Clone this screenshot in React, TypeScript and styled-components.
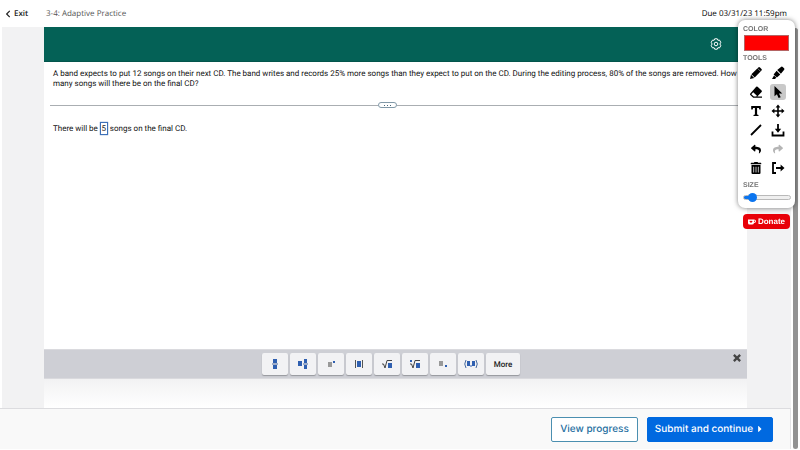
import React, { useState } from "react";
import styled, { createGlobalStyle } from "styled-components";
import { FaChevronLeft, FaReply, FaShare, FaTrashAlt, FaCaretRight } from "react-icons/fa";

const GlobalStyle = createGlobalStyle`
  *, *::before, *::after { box-sizing: border-box; }
  body {
    margin: 0;
    background: #fff;
    font-family: "Liberation Sans", Arial, sans-serif;
    text-rendering: geometricPrecision;
  }
  button, input { font: inherit; margin: 0; text-rendering: inherit; }
`;

const Screen = styled.div`
  display: flex;
  min-height: 100vh;
  padding: 0 2px 1px 0;
`;

const Page = styled.div`
  flex: 1;
  min-width: 0;
  display: flex;
  flex-direction: column;
`;

const Header = styled.header`
  display: flex;
  align-items: center;
  height: 27px;
  padding: 0 4px;
  font-family: "Open Sans", "Noto Sans", sans-serif;
  font-size: 8px;
  color: #333;
`;

const ExitLink = styled.a`
  display: flex;
  align-items: center;
  gap: 2px;
  width: 42px;
  height: 24px;
  color: #222;
  font-weight: 600;
  text-decoration: none;
  svg { width: 8px; height: 8px; }
`;

const Title = styled.h1`
  margin: 0;
  flex: 1;
  font-size: 8px;
  font-weight: 400;
  color: #555;
`;

const Due = styled.span`
  color: #000;
  font-weight: 500;
`;

const Stage = styled.main`
  flex: 1;
  display: flex;
  margin-left: 2px;
  padding: 0 44px 0 42px;
  background: #f2f2f3;
`;

const Sheet = styled.section`
  flex: 1;
  min-width: 0;
  display: flex;
  flex-direction: column;
  background: #fff;
`;

const Banner = styled.div`
  display: flex;
  align-items: center;
  justify-content: flex-end;
  height: 35px;
  padding-right: 25px;
  background: #046156;
  border-bottom: 1px solid #03554c;
`;

const BannerButton = styled.button`
  display: flex;
  padding: 0;
  border: 0;
  background: none;
  color: #fff;
`;

const Exercise = styled.div`
  flex: 1;
  padding: 7px 6px;
  font-family: Roboto, "Liberation Sans", sans-serif;
  font-size: 8px;
  line-height: 10px;
  color: #111;
`;

const Question = styled.p`
  margin: 0;
  padding: 0 0 0 3px;
`;

const Divider = styled.div`
  display: flex;
  align-items: center;
  height: 6px;
  margin-top: 13px;
  &::before, &::after { content: ""; height: 1px; background: #aaaeb2; }
  &::before { flex: 328; }
  &::after { flex: 344; }
`;

const DividerHandle = styled.button`
  display: flex;
  align-items: center;
  justify-content: center;
  gap: 2px;
  width: 19px;
  height: 6px;
  padding: 0;
  border: 1px solid #8299a8;
  border-radius: 3px;
  background: #fff;
`;

const Dot = styled.i`
  width: 1px;
  height: 1px;
  background: #4a6678;
`;

const Answer = styled.label`
  display: flex;
  align-items: center;
  gap: 2px;
  margin-top: 14px;
  padding-left: 3px;
`;

const AnswerInput = styled.input`
  width: 8px;
  height: 13px;
  padding: 0;
  border: 1px solid #3d70b8;
  border-radius: 0;
  outline: 0;
  background: #fff;
  box-shadow: 0 0 1px #3d70b8;
  color: #222;
  text-align: center;
`;

const MathBar = styled.div`
  display: flex;
  height: 30px;
  padding: 3px 6px 3px 218px;
  border: 1px solid #dadade;
  border-width: 1px 0;
  background: #cecfd5;
`;

const Keys = styled.div`
  flex: 1;
  display: flex;
  gap: 2px;
`;

const Key = styled.button<{ $wide?: boolean }>`
  display: flex;
  align-items: center;
  justify-content: center;
  width: ${(p) => (p.$wide ? 34 : 26)}px;
  height: 22px;
  padding: 0;
  border: 0;
  border-radius: 2px;
  background: #f2f2f4;
  box-shadow: 0 1px 1px #96979d;
  font-family: Roboto, sans-serif;
  font-size: 8px;
  font-weight: 500;
  color: #222;
`;

const CloseButton = styled.button`
  display: flex;
  width: 8px;
  height: 8px;
  margin-top: 1px;
  padding: 0;
  border: 0;
  background: none;
`;

const Fade = styled.div`
  height: 29px;
  background: linear-gradient(#f2f2f3, #fff);
`;

const Footer = styled.footer`
  display: flex;
  align-items: center;
  justify-content: flex-end;
  gap: 9px;
  height: 41px;
  padding-right: 17px;
  border-top: 1px solid #dcdcdf;
  border-right: 1px solid #e4e4e6;
  background: #f9f9f9;
`;

const Action = styled.button<{ $primary?: boolean }>`
  display: flex;
  align-items: center;
  justify-content: center;
  gap: 2px;
  width: ${(p) => (p.$primary ? 126 : 87)}px;
  height: 25px;
  padding: 0;
  border: 1px solid ${(p) => (p.$primary ? "#0069e0" : "#4b8fb0")};
  border-radius: 2px;
  background: ${(p) => (p.$primary ? "#0069e0" : "#fff")};
  color: ${(p) => (p.$primary ? "#fff" : "#1f6f9f")};
  font-family: Inter, sans-serif;
  font-size: 10px;
  font-weight: 500;
`;

const Scrollbar = styled.div`
  width: 7px;
  padding: 28px 0 0 2px;
  display: flex;
`;

const Thumb = styled.div`
  flex: 1;
  border-radius: 3px;
  background: #929292;
`;

const Palette = styled.aside`
  position: fixed;
  top: 20px;
  right: 5px;
  width: 57px;
`;

const PaletteCard = styled.div`
  padding: 5px 5px 6px;
  border-radius: 7px;
  background: #fff;
  box-shadow: 0 0 5px rgba(0, 0, 0, 0.5);
`;

const Caption = styled.div`
  display: block;
  height: 9px;
  font-size: 7px;
  line-height: 9px;
  font-weight: 700;
  color: #777;
`;

const Swatch = styled.button`
  display: block;
  width: 45px;
  height: 16px;
  margin: 1px 0 3px 1px;
  padding: 0;
  border: 1px solid #b46464;
  background: #f00;
`;

const ToolGrid = styled.div`
  display: grid;
  grid-template-columns: 16px 16px;
  column-gap: 6px;
  row-gap: 3px;
  margin: 2px 0 5px 5px;
`;

const Tool = styled.button<{ $active?: boolean; $muted?: boolean }>`
  display: flex;
  align-items: center;
  justify-content: center;
  height: 16px;
  padding: 0;
  border: 0;
  border-radius: 3px;
  background: ${(p) => (p.$active ? "#c9c9c9" : "none")};
  color: ${(p) => (p.$muted ? "#b5b5b5" : "#000")};
`;

const SizeSlider = styled.input`
  display: block;
  appearance: none;
  width: 48px;
  height: 9px;
  margin-top: 3px;
  background: none;
  &::-webkit-slider-runnable-track {
    height: 5px;
    border: 1px solid #b9b9b9;
    border-radius: 3px;
    background: linear-gradient(90deg, #0c75ef 18%, #efefef 18%);
  }
  &::-webkit-slider-thumb {
    appearance: none;
    width: 9px;
    height: 9px;
    margin-top: -3px;
    border-radius: 50%;
    background: #0c75ef;
  }
`;

const Donate = styled.a`
  display: flex;
  align-items: center;
  justify-content: center;
  gap: 2px;
  width: 47px;
  height: 15px;
  margin: 6px 0 0 5px;
  border-radius: 4px;
  background: #e80008;
  color: #fff;
  font-size: 8px;
  font-weight: 700;
  text-decoration: none;
`;

const blue = "#2f5fb0";

const keys = [
  { label: "Fraction", art: <><path fill={blue} d="M5 2h4v4H5zM5 8h4v4H5z" /><path stroke="#4a679b" d="M4 7h6" /></> },
  { label: "Mixed number", art: <><path fill={blue} d="M2 4h4v5H2zM8 2h3v4H8zM8 8h3v4H8z" /><path stroke="#4a679b" d="M7 7h5" /></> },
  { label: "Exponent", art: <><path fill="#999" d="M4 5h4v5H4z" /><path fill={blue} d="M9 4h2v2H9z" /></> },
  { label: "Absolute value", art: <><path fill={blue} d="M5 4h4v6H5z" /><path stroke="#555" d="M3.500 3v8M10.500 3v8" /></> },
  { label: "Square root", art: <><path fill={blue} d="M8 6h4v5H8z" /><path fill="none" stroke="#444" d="M2 7l1.500 0 1.500 4L7 3.500h5" /></> },
  { label: "Root", art: <><path fill={blue} d="M8 6h4v5H8zM2 3h2v2H2z" /><path fill="none" stroke="#444" d="M2 7l1.500 0 1.500 4L7 3.500h5" /></> },
  { label: "Subscript", art: <><path fill="#999" d="M3 4h4v5H3z" /><path fill={blue} d="M9 8h2v2H9z" /></> },
  { label: "Ordered pair", art: <><path fill={blue} d="M3 4h3v5H3zM8 4h3v5H8zM6.500 8h1v2h-1z" /><path fill="none" stroke="#46699f" d="M2 3Q-.5 7 2 11M12 3Q14.500 7 12 11" /></> },
];

const Glyph = ({ children, size = 14 }: { children: React.ReactNode; size?: number }) => (
  <svg width={size} height={size} viewBox="0 0 14 14" fill="currentColor" aria-hidden="true">{children}</svg>
);

const tools = [
  { label: "Pencil", icon: <Glyph><path d="M1 13l1-4.200 3.200 3.300zM2.400 8.200L9.300 1.400q.8-.8 1.700 0l1.500 1.500q.8.8 0 1.700L5.700 11.500z" /><path stroke="#fff" strokeWidth=".5" d="M8.600 2.400l3 3" /></Glyph> },
  { label: "Highlighter", icon: <Glyph><path d="M1 13l2-3.500 2.200 2.100-1.100 1.400zM2.600 8.400L5.600 4.700l3.700 3.700-3.400 3.100zM6.200 4.100l4.100-3.300q.7-.5 1.400.1l1.400 1.400q.6.7.1 1.400L9.900 7.800z" /></Glyph> },
  { label: "Eraser", icon: <Glyph><path d="M7.200 1.800q.7-.7 1.400 0l4 3.700q.7.7 0 1.400L8.300 11.400H13v1.300H4.200L1.300 9.900q-.7-.7 0-1.400z" /><path fill="#fff" d="M4.200 7.200l3.700 3.600-.6.6H4.800L2.300 9.200z" /></Glyph> },
  { label: "Select", active: true, icon: <Glyph><path d="M3.500 1l7.800 7.400H8l1.700 3.800-2.100.9-1.700-3.900-2.400 2z" /></Glyph> },
  { label: "Text", icon: <Glyph><path d="M2.200 2h9.600v3.400h-1.500l-.4-1.500H8.100v6.700l1.400.4v1h-5v-1l1.400-.4V3.900H4.100l-.4 1.500H2.200z" /></Glyph> },
  { label: "Move", icon: <Glyph><path fill="none" stroke="currentColor" strokeWidth="1.600" d="M7 2v10M2 7h10" /><path d="M7 .5l2.400 2.900H4.600zM7 13.500l2.400-2.900H4.600zM.5 7l2.900-2.400v4.800zM13.500 7l-2.900-2.400v4.800z" /></Glyph> },
  { label: "Line", icon: <Glyph><path stroke="currentColor" strokeWidth="1.800" d="M2 12L12 2" /></Glyph> },
  { label: "Download", icon: <Glyph><path fill="none" stroke="currentColor" strokeWidth="1.800" d="M1.500 8.500v4h11v-4M7 1v6" /><path d="M3.800 5.800h6.400L7 9.800z" /></Glyph> },
  { label: "Undo", icon: <FaReply size={10} /> },
  { label: "Redo", muted: true, icon: <FaShare size={10} /> },
  { label: "Clear", icon: <FaTrashAlt size={12} /> },
  { label: "Leave", icon: <Glyph><path fill="none" stroke="currentColor" strokeWidth="1.800" d="M5 2H2v10h3M5 7h6" /><path d="M9.600 3.600L13.500 7l-3.900 3.400z" /></Glyph> },
];

export default function App() {
  const [answer, setAnswer] = useState("5");
  const [size, setSize] = useState(10);
  return (
    <>
      <GlobalStyle />
      <Screen>
        <Page>
          <Header>
            <ExitLink href="#exit"><FaChevronLeft />Exit</ExitLink>
            <Title>3-4: Adaptive Practice</Title>
            <Due>Due 03/31/23 11:59pm</Due>
          </Header>
          <Stage>
            <Sheet>
              <Banner>
                <BannerButton aria-label="Settings">
                  <svg width="12" height="12" viewBox="0 0 12 12" fill="none" stroke="currentColor">
                    <path strokeLinejoin="round" d="M4.700.8h2.600l.6 1.500 1.600-.2 1.300 2.200L9.900 6l.9 1.700-1.300 2.200-1.600-.2-.6 1.500H4.700l-.6-1.500-1.600.2-1.300-2.200L2.100 6l-.9-1.700 1.300-2.200 1.600.2z" />
                    <circle cx="6" cy="6" r="1.800" />
                  </svg>
                </BannerButton>
              </Banner>
              <Exercise>
                <Question>
                  A band expects to put 12 songs on their next CD. The band writes and records 25% more songs than they expect to put on the CD. During the editing process, 80% of the songs are removed. How many songs will there be on the final CD?
                </Question>
                <Divider><DividerHandle aria-label="Resize question"><Dot /><Dot /><Dot /></DividerHandle></Divider>
                <Answer>
                  <span>There will be</span>
                  <AnswerInput value={answer} onChange={(e) => setAnswer(e.target.value)} />
                  <span>songs on the final CD.</span>
                </Answer>
              </Exercise>
              <MathBar>
                <Keys>
                  {keys.map((k) => <Key key={k.label} aria-label={k.label}><Glyph>{k.art}</Glyph></Key>)}
                  <Key $wide>More</Key>
                </Keys>
                <CloseButton aria-label="Close keypad">
                  <Glyph size={8}><path stroke="#444" strokeWidth="4" d="M1.500 1.500l11 11M12.500 1.500l-11 11" /></Glyph>
                </CloseButton>
              </MathBar>
              <Fade />
            </Sheet>
          </Stage>
          <Footer>
            <Action>View progress</Action>
            <Action $primary>Submit and continue <FaCaretRight size={10} /></Action>
          </Footer>
        </Page>
        <Scrollbar><Thumb /></Scrollbar>
      </Screen>
      <Palette>
        <PaletteCard>
          <Caption>COLOR</Caption>
          <Swatch aria-label="Red" />
          <Caption>TOOLS</Caption>
          <ToolGrid>
            {tools.map((t) => (
              <Tool key={t.label} aria-label={t.label} $active={t.active} $muted={t.muted}>{t.icon}</Tool>
            ))}
          </ToolGrid>
          <Caption as="label" htmlFor="brush-size">SIZE</Caption>
          <SizeSlider id="brush-size" type="range" min="0" max="100" value={size} onChange={(e) => setSize(Number(e.target.value))} />
        </PaletteCard>
        <Donate href="#donate">
          <svg width="8" height="6" viewBox="0 0 8 6"><path fill="#fff" d="M0 .5h6q2 0 2 1.700T6 4Q5.700 5.500 4 5.500H1.500Q0 5.500 0 4z" /><path fill="#e80008" d="M3 4L1.500 2.500q0-1.200 1.500-.5 1.500-.7 1.500.5zM6 1.500v1.500q1 0 1-.8T6 1.500" /></svg>
          Donate
        </Donate>
      </Palette>
    </>
  );
}
